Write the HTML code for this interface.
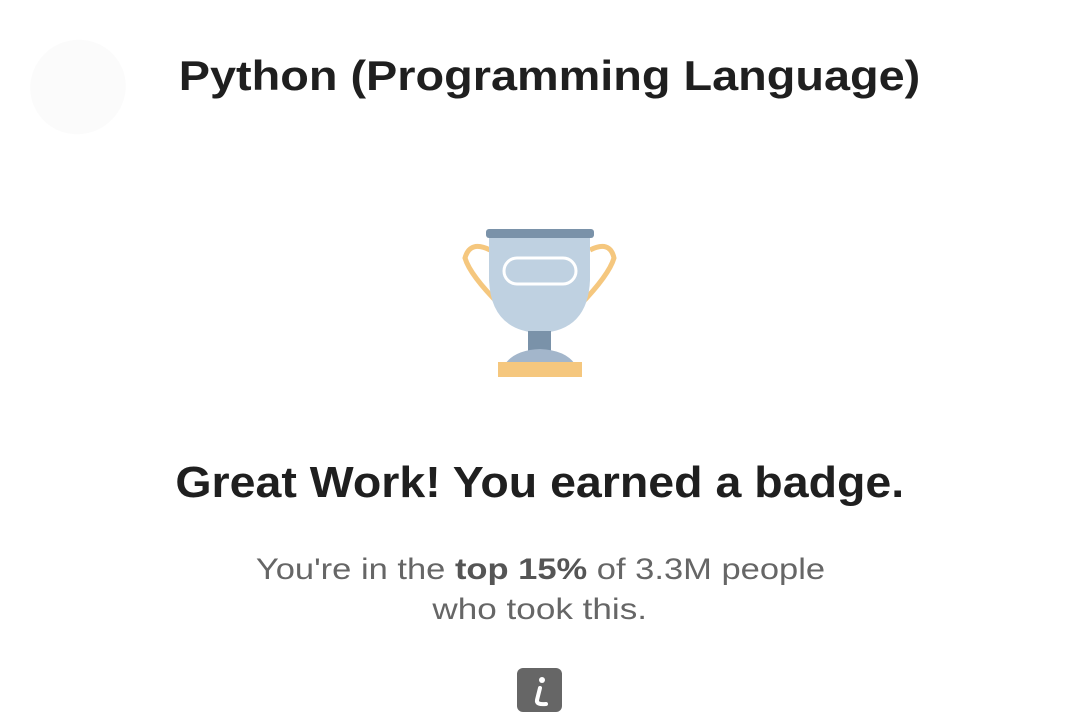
<!DOCTYPE html>
<html><head><style>
html,body{margin:0;padding:0;background:#fff;width:1080px;height:720px;overflow:hidden;font-family:"Liberation Sans",Roboto,sans-serif;}
.t{position:absolute;left:0;width:1080px;text-align:center;}
.t span{display:inline-block;}
</style></head><body>
<div style="position:absolute;left:30px;top:40px;width:96px;height:94px;border-radius:50%;background:#fbfbfb;transform:rotate(-30deg)"></div>
<div class="t" style="top:52px;left:10px;font-size:42px;color:#1f1f1f;font-weight:bold;"><span style="transform:scaleX(1.115)">Python (Programming Language)</span></div>
<svg style="position:absolute;left:0;top:0" width="1080" height="720">
<path d="M490 250 Q470 240 465 258 Q470 275 500 305" fill="none" stroke="#f5c77e" stroke-width="5"/>
<path d="M590 250 Q610 240 614 258 Q609 275 580 305" fill="none" stroke="#f5c77e" stroke-width="5"/>
<path d="M489 238 L590 238 L590 280 Q588 331 540 333 Q491 331 489 280 Z" fill="#bfd1e1"/>
<rect x="486" y="229" width="108" height="9" rx="3" fill="#7a92a9"/>
<rect x="504" y="258" width="72" height="26" rx="13" fill="none" stroke="#fff" stroke-width="3"/>
<rect x="528" y="331" width="23" height="22" fill="#7a92a9"/>
<path d="M505 364 Q515 350 540 349 Q565 350 575 364 Z" fill="#a3b6cb"/>
<rect x="498" y="362" width="84" height="15" fill="#f5c77e"/>
<rect x="517" y="668" width="45" height="44" rx="6" fill="#666"/>
<circle cx="542" cy="680" r="3" fill="#fff"/>
<path d="M540 688 L537 700 Q536 705 546 704" fill="none" stroke="#fff" stroke-width="4" stroke-linecap="round"/>
</svg>
<div class="t" style="top:458px;font-size:44px;color:#1f1f1f;font-weight:bold;"><span style="transform:scaleX(1.057)">Great Work! You earned a badge.</span></div>
<div class="t" style="top:550px;font-size:30px;color:#666;line-height:40px;"><span style="transform:scaleX(1.15)">You're in the <b style="color:#555">top 15%</b> of 3.3M people</span><br><span style="transform:scaleX(1.17)">who took this.</span></div>
</body></html>
